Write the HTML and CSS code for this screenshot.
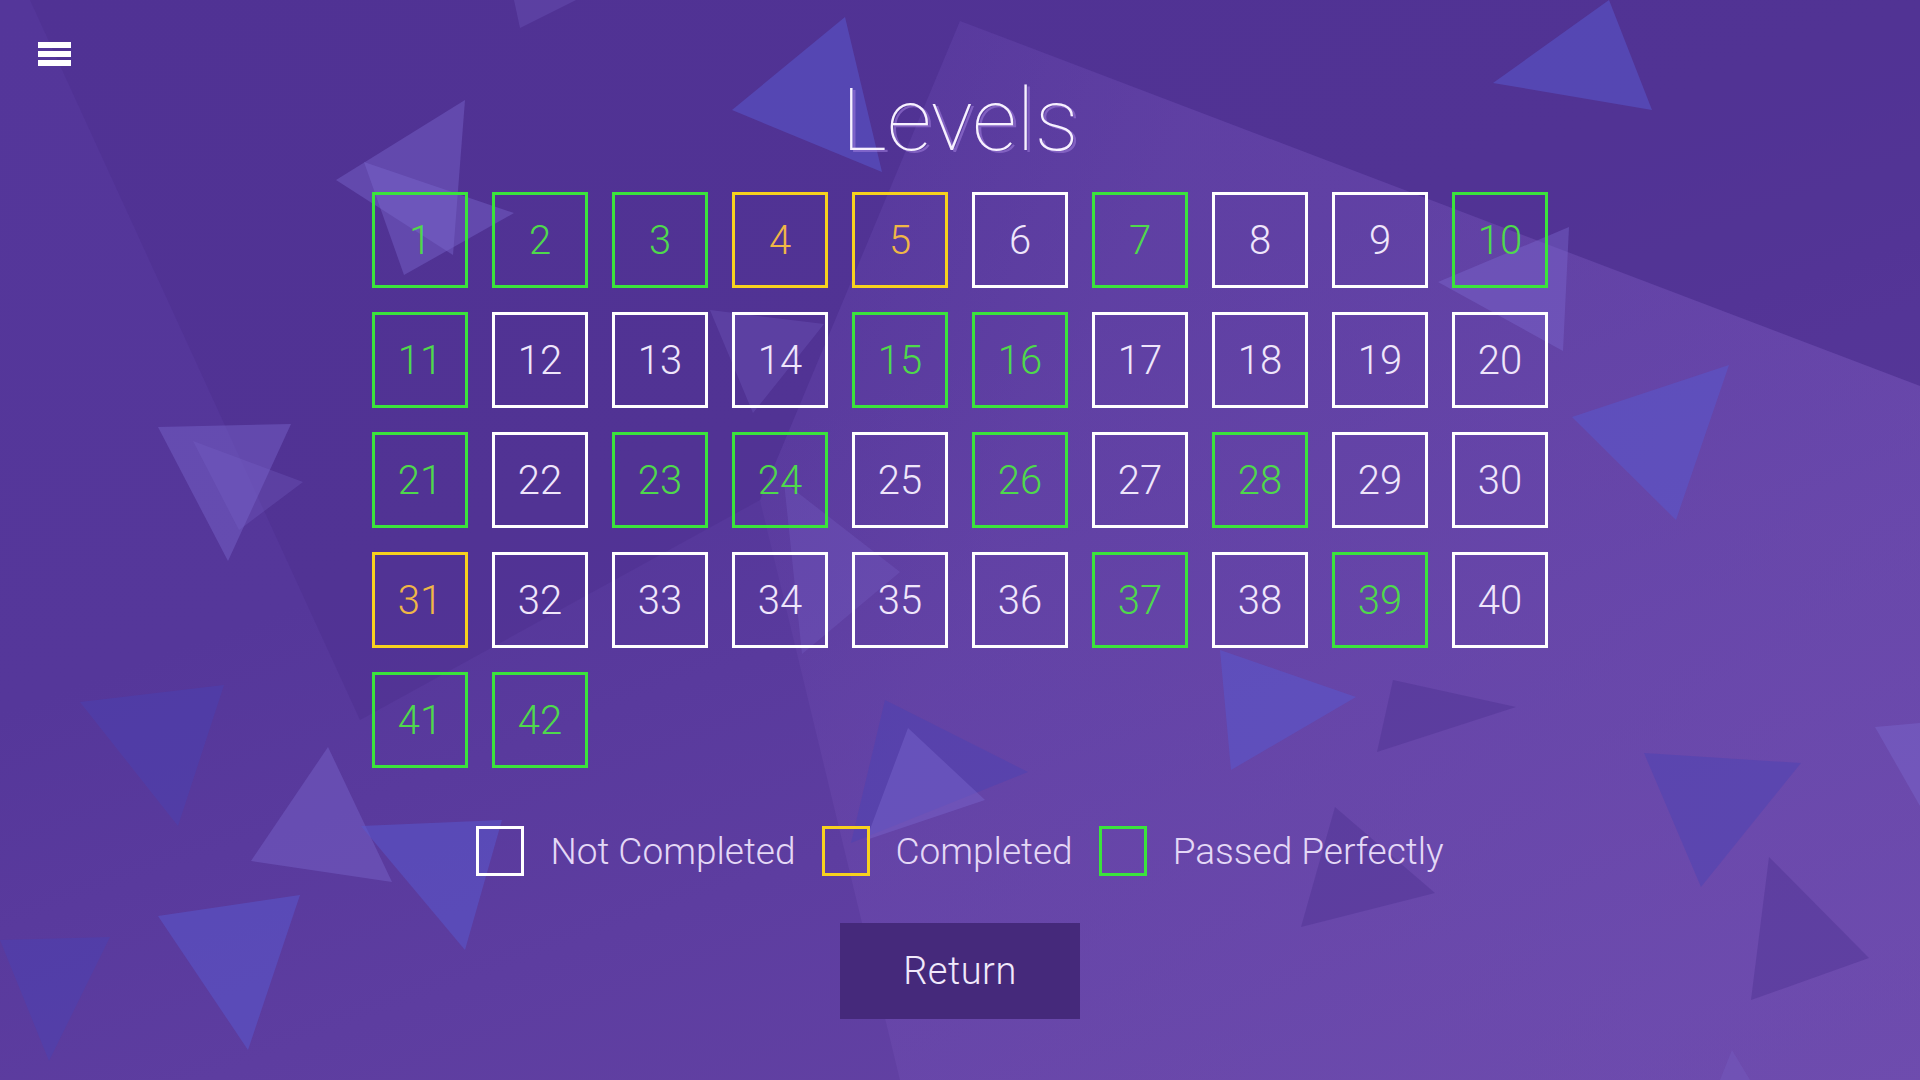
FILE: index.html
```html
<!DOCTYPE html>
<html lang="en">
<head>
<meta charset="utf-8">
<title>Levels</title>
<link rel="stylesheet" href="styles.css">
</head>
<body>
<div class="page">
  <svg class="bg" viewBox="0 0 1920 1080" preserveAspectRatio="none" aria-hidden="true">
    <defs>
      <linearGradient id="lightband" x1="0" y1="0" x2="1" y2="0.4">
        <stop offset="0" stop-color="#7250b4" stop-opacity="0"/>
        <stop offset="0.35" stop-color="#7250b4" stop-opacity="0.35"/>
        <stop offset="1" stop-color="#7654b8" stop-opacity="0.45"/>
      </linearGradient>
    </defs>
    <polygon class="shade-dark" points="30,0 1920,0 1920,386 960,21 760,500 360,720"/>
    <polygon fill="url(#lightband)" points="960,21 1920,386 1920,1080 900,1080 760,500"/>
    <polygon class="tri-light" points="336,180 465,100 453,255"/>
    <polygon class="tri-light" points="364,162 514,213 404,275"/>
    <polygon class="tri-blue" points="732,110 845,17 882,172"/>
    <polygon class="tri-light" points="158,427 291,424 228,561"/>
    <polygon class="tri-light2" points="193,441 303,482 239,530"/>
    <polygon class="tri-blue-dark" points="80,702 224,685 178,826"/>
    <polygon class="tri-light" points="251,861 328,747 392,882"/>
    <polygon class="tri-blue" points="158,916 300,895 248,1050"/>
    <polygon class="tri-blue-dark" points="0,940 110,937 49,1061"/>
    <polygon class="tri-blue" points="361,826 502,820 465,950"/>
    <polygon class="tri-light2" points="710,310 824,324 753,413"/>
    <polygon class="tri-light2" points="784,482 900,572 802,654"/>
    <polygon class="tri-blue-dark" points="885,700 1028,772 851,843"/>
    <polygon class="tri-light" points="908,728 985,800 866,840"/>
    <polygon class="tri-light2" points="514,0 576,0 520,28"/>
    <polygon class="tri-blue" points="1493,83 1609,0 1652,110"/>
    <polygon class="tri-blue" points="1572,417 1729,365 1676,520"/>
    <polygon class="tri-light" points="1438,282 1569,227 1563,351"/>
    <polygon class="tri-blue" points="1220,650 1356,697 1231,770"/>
    <polygon class="tri-dark" points="1393,680 1516,707 1377,752"/>
    <polygon class="tri-blue-dark" points="1644,753 1801,763 1701,887"/>
    <polygon class="tri-light" points="1875,727 1920,723 1920,806"/>
    <polygon class="tri-dark" points="1769,857 1869,958 1751,1000"/>
    <polygon class="tri-dark" points="1335,807 1435,893 1301,927"/>
    <polygon class="tri-light2" points="1720,1080 1732,1050 1750,1080"/>
  </svg>

  <div class="layout">
    <div class="side">
      <button class="menu" type="button" aria-label="Menu">
        <span class="bar"></span><span class="bar"></span><span class="bar"></span>
      </button>
    </div>

    <main class="main">
      <h1 class="title">Levels</h1>

      <div class="grid">
        <button class="level perfect">1</button>
        <button class="level perfect">2</button>
        <button class="level perfect">3</button>
        <button class="level done">4</button>
        <button class="level done">5</button>
        <button class="level">6</button>
        <button class="level perfect">7</button>
        <button class="level">8</button>
        <button class="level">9</button>
        <button class="level perfect">10</button>

        <button class="level perfect">11</button>
        <button class="level">12</button>
        <button class="level">13</button>
        <button class="level">14</button>
        <button class="level perfect">15</button>
        <button class="level perfect">16</button>
        <button class="level">17</button>
        <button class="level">18</button>
        <button class="level">19</button>
        <button class="level">20</button>

        <button class="level perfect">21</button>
        <button class="level">22</button>
        <button class="level perfect">23</button>
        <button class="level perfect">24</button>
        <button class="level">25</button>
        <button class="level perfect">26</button>
        <button class="level">27</button>
        <button class="level perfect">28</button>
        <button class="level">29</button>
        <button class="level">30</button>

        <button class="level done">31</button>
        <button class="level">32</button>
        <button class="level">33</button>
        <button class="level">34</button>
        <button class="level">35</button>
        <button class="level">36</button>
        <button class="level perfect">37</button>
        <button class="level">38</button>
        <button class="level perfect">39</button>
        <button class="level">40</button>

        <button class="level perfect">41</button>
        <button class="level perfect">42</button>
      </div>

      <div class="legend">
        <span class="legend-box"></span>
        <span class="legend-text">Not Completed</span>
        <span class="legend-box done"></span>
        <span class="legend-text">Completed</span>
        <span class="legend-box perfect"></span>
        <span class="legend-text">Passed Perfectly</span>
      </div>

      <button class="return" type="button">Return</button>
    </main>

    <div class="side"></div>
  </div>
</div>
</body>
</html>
```

FILE: styles.css
```css
html, body {
  margin: 0;
  padding: 0;
}

body {
  font-family: "Roboto", "Liberation Sans", sans-serif;
  background: #55379a;
}

.page {
  position: relative;
  width: 1920px;
  height: 1080px;
  overflow: hidden;
  background: linear-gradient(160deg, #54369a 0%, #55379a 40%, #5d3da0 65%, #6745a6 100%);
}

.bg {
  position: absolute;
  inset: 0;
  width: 100%;
  height: 100%;
  z-index: 0;
}

.shade-dark { fill: #4a2d8c; opacity: 0.4; }
.tri-light { fill: #7c68d0; opacity: 0.42; }
.tri-light2 { fill: #7a64c8; opacity: 0.28; }
.tri-blue { fill: #5a58cc; opacity: 0.55; }
.tri-blue-dark { fill: #4a42b4; opacity: 0.45; }
.tri-dark { fill: #4c2f8e; opacity: 0.4; }

.layout {
  position: relative;
  z-index: 1;
  display: grid;
  grid-template-columns: 1fr auto 1fr;
  height: 100%;
}

.side {
  display: flex;
  align-items: flex-start;
}

.menu {
  margin: 42px 0 0 38px;
  padding: 0;
  width: 33px;
  border: none;
  background: none;
  display: flex;
  flex-direction: column;
  gap: 3px;
  cursor: pointer;
}

.bar {
  display: block;
  height: 6px;
  width: 33px;
  background: #ffffff;
}

.main {
  display: flex;
  flex-direction: column;
  align-items: center;
  padding-top: 76px;
}

.title {
  margin: 0;
  font-size: 88px;
  line-height: 88px;
  font-weight: 100;
  color: #f7f1ff;
  letter-spacing: 0;
  text-shadow: 3px 2px 0 rgba(160, 125, 220, 0.55);
}

.grid {
  margin-top: 28px;
  display: grid;
  grid-template-columns: repeat(10, 96px);
  grid-auto-rows: 96px;
  gap: 24px;
}

.level {
  box-sizing: border-box;
  width: 96px;
  height: 96px;
  border: 3px solid #ffffff;
  background: transparent;
  color: #efe6fb;
  font-family: "Roboto", "Liberation Sans", sans-serif;
  font-size: 40px;
  font-weight: 300;
  display: flex;
  align-items: center;
  justify-content: center;
  padding: 0;
  cursor: pointer;
}

.level.perfect {
  border-color: #3be33c;
  color: #4fd94c;
}

.level.done {
  border-color: #f7d11e;
  color: #f0b746;
}

.legend {
  margin-top: 58px;
  display: flex;
  align-items: center;
  gap: 26px;
}

.legend-box {
  box-sizing: border-box;
  width: 48px;
  height: 50px;
  border: 3px solid #ffffff;
}

.legend-box.done { border-color: #f7d11e; }
.legend-box.perfect { border-color: #3be33c; }

.legend-text {
  font-size: 37px;
  font-weight: 300;
  letter-spacing: 0;
  color: #e4d8f6;
}

.return {
  margin-top: 47px;
  width: 240px;
  height: 96px;
  border: none;
  background: #45297b;
  color: #f1e9fb;
  font-family: "Roboto", "Liberation Sans", sans-serif;
  font-size: 38px;
  font-weight: 300;
  letter-spacing: 0.5px;
  cursor: pointer;
}
```
